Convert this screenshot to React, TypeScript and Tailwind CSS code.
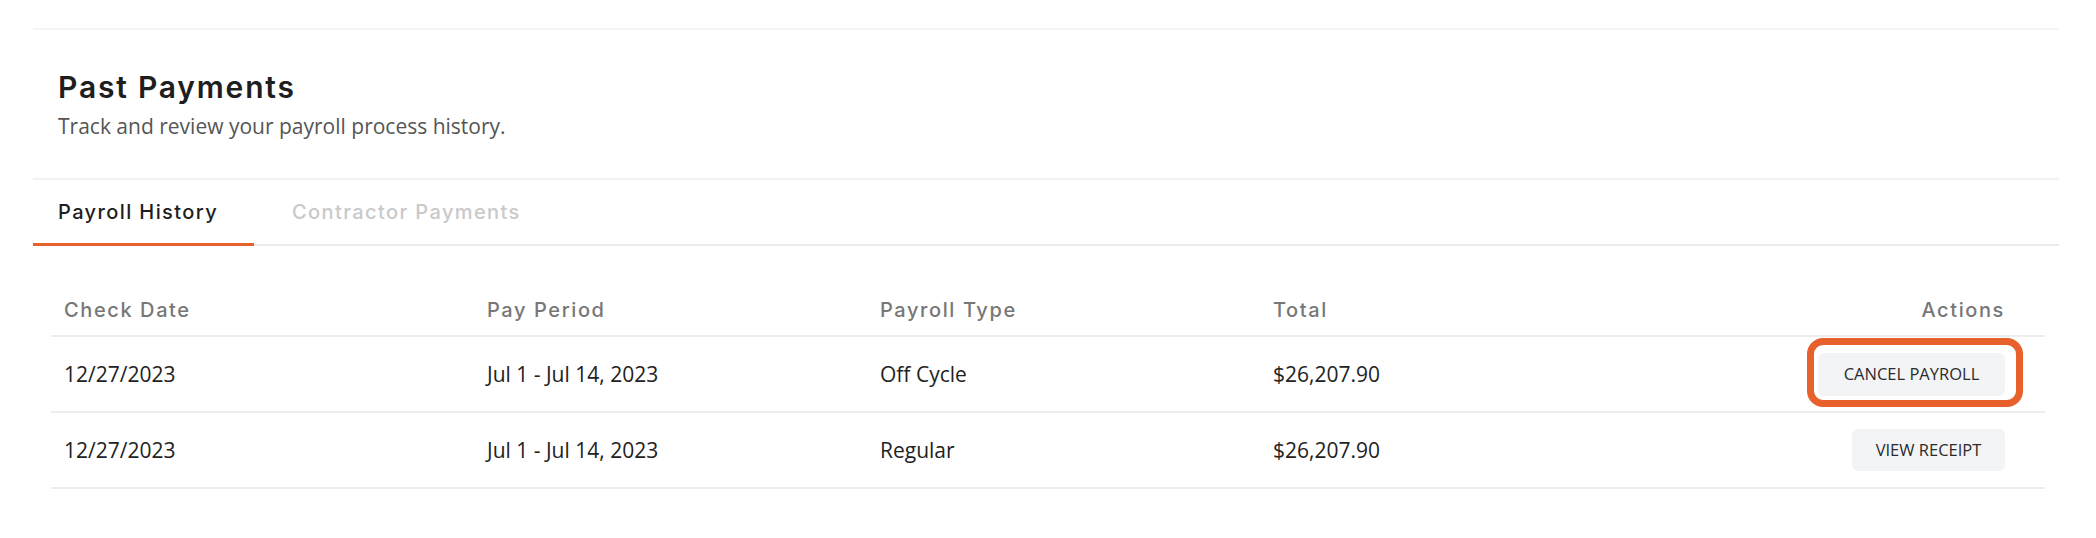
import React from 'react';

interface PaymentRow {
  checkDate: string;
  payPeriod: string;
  type: string;
  total: string;
  action: 'cancel' | 'receipt';
}

const rows: PaymentRow[] = [
  { checkDate: '12/27/2023', payPeriod: 'Jul 1 - Jul 14, 2023', type: 'Off Cycle', total: '$26,207.90', action: 'cancel' },
  { checkDate: '12/27/2023', payPeriod: 'Jul 1 - Jul 14, 2023', type: 'Regular', total: '$26,207.90', action: 'receipt' },
];

const heading = { fontFamily: 'Inter, "Noto Sans", sans-serif' };
const body = { fontFamily: '"Open Sans", "Noto Sans", sans-serif' };

const cols = 'grid grid-cols-[423px_393px_393px_393px_1fr]';

function ActionButton({ action }: { action: PaymentRow['action'] }) {
  if (action === 'cancel') {
    return (
      <div className="relative">
        <span className="pointer-events-none absolute -left-[11px] -right-[18px] -top-[15px] -bottom-[11px] rounded-[16px] border-[7px] border-[#e8612c]" />
        <button
          type="button"
          className="flex h-[43px] w-[187px] items-center justify-center rounded-[6px] bg-[#f3f4f6] text-[16.5px] uppercase text-[#2b2b2b]"
          style={body}
        >
          Cancel Payroll
        </button>
      </div>
    );
  }
  return (
    <button
      type="button"
      className="flex h-[42px] w-[153px] items-center justify-center rounded-[6px] bg-[#f3f4f6] text-[16.5px] uppercase text-[#2b2b2b]"
      style={body}
    >
      View Receipt
    </button>
  );
}

export default function App() {
  return (
    <div className="min-h-[538px] bg-white pl-[33px] pr-[37px] pt-[28px]">
      <div className="border-t-2 border-[#f4f4f4]">
        <div className="pb-[38px] pl-[25px] pt-[39px]">
          <h1
            className="text-[30px] font-semibold leading-[36px] tracking-[0.06em] text-[#1e1e1e]"
            style={heading}
          >
            Past Payments
          </h1>
          <p className="mt-[7px] text-[21px] leading-[28px] text-[#555555]" style={body}>
            Track and review your payroll process history.
          </p>
        </div>

        <div className="flex border-y-2 border-t-[#f2f2f2] border-b-[#ebebef]" style={heading}>
          <button
            type="button"
            className="relative flex h-[64px] w-[221px] items-center pl-[25px] text-[20px] font-medium tracking-[0.07em] text-[#1e1e1e]"
          >
            Payroll History
            <span className="absolute -bottom-[2px] left-0 right-0 h-[3px] bg-[#e8612c]" />
          </button>
          <button
            type="button"
            className="flex h-[64px] items-center pl-[38px] text-[20px] font-medium tracking-[0.07em] text-[#c9c9c9]"
          >
            Contractor Payments
          </button>
        </div>

        <div className="ml-[18px] mr-[14px] mt-[50px]">
          <div
            className={`${cols} border-b-2 border-[#ededed] pb-[11px] text-[20px] font-medium leading-[28px] tracking-[0.08em] text-[#777777]`}
            style={heading}
          >
            <div className="pl-[13px]">Check Date</div>
            <div className="pl-[13px]">Pay Period</div>
            <div className="pl-[13px]">Payroll Type</div>
            <div className="pl-[13px]">Total</div>
            <div className="pr-[40px] text-right">Actions</div>
          </div>

          {rows.map((row, i) => (
            <div
              key={i}
              className={`${cols} h-[76px] items-center border-b-2 border-[#ededed] text-[21px] leading-[28px] text-[#222222]`}
              style={body}
            >
              <div className="pl-[13px]">{row.checkDate}</div>
              <div className="pl-[13px]">{row.payPeriod}</div>
              <div className="pl-[13px]">{row.type}</div>
              <div className="pl-[13px]">{row.total}</div>
              <div className="flex justify-end pr-[40px]">
                <ActionButton action={row.action} />
              </div>
            </div>
          ))}
        </div>
      </div>
    </div>
  );
}
